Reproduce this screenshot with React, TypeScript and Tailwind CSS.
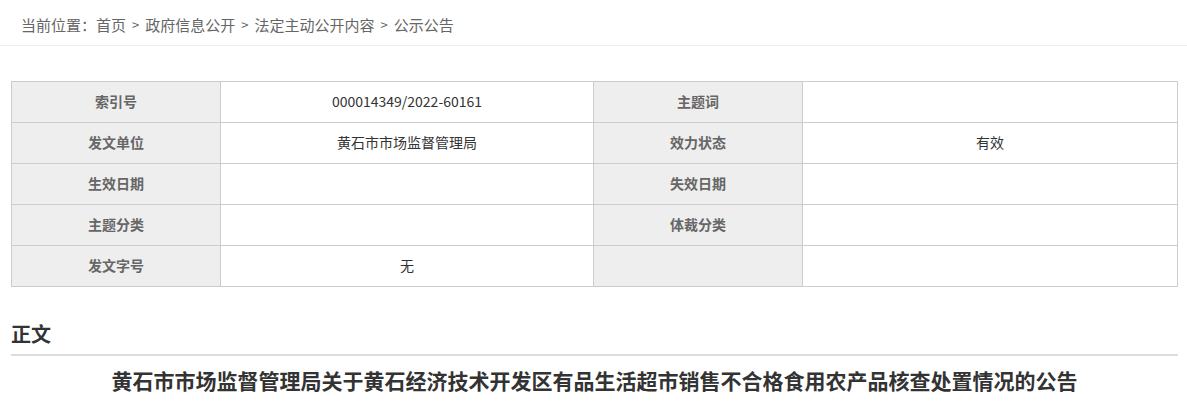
const font = { fontFamily: '"Microsoft YaHei", "Noto Sans CJK SC", sans-serif' };

const rows: [string, string, string, string][] = [
  ['索引号', '000014349/2022-60161', '主题词', ''],
  ['发文单位', '黄石市市场监督管理局', '效力状态', '有效'],
  ['生效日期', '', '失效日期', ''],
  ['主题分类', '', '体裁分类', ''],
  ['发文字号', '无', '', ''],
];

const crumbs = ['政府信息公开', '法定主动公开内容', '公示公告'];

export default function App() {
  return (
    <div className="bg-white w-[1187px] h-[409px] overflow-hidden" style={font}>
      <div className="h-[46px] border-b border-[#eeeeee] pl-[21px] pt-[13px] text-[15px] leading-[24px] text-[#666] flex">
        <span>当前位置：</span>
        <span>首页</span>
        {crumbs.map((c) => (
          <span key={c} className="flex">
            <span className="mx-[6px] text-[13px]">&gt;</span>
            <span>{c}</span>
          </span>
        ))}
      </div>

      <div className="ml-[11px] w-[1167px] pt-[35px]">
        <table className="w-full border-collapse table-fixed text-[14px]">
          <colgroup>
            <col className="w-[209px]" />
            <col className="w-[373px]" />
            <col className="w-[209px]" />
            <col />
          </colgroup>
          <tbody>
            {rows.map((r, i) => (
              <tr key={i} className="h-[41px]">
                <td className="border border-[#cccccc] bg-[#eeeeee] text-center font-bold text-[#666] p-0 pb-[2px]">{r[0]}</td>
                <td className="border border-[#cccccc] text-center text-[#333] p-0 pb-[2px]">{r[1]}</td>
                <td className="border border-[#cccccc] bg-[#eeeeee] text-center font-bold text-[#666] p-0 pb-[2px]">{r[2]}</td>
                <td className="border border-[#cccccc] text-center text-[#333] p-0 pb-[2px]">{r[3]}</td>
              </tr>
            ))}
          </tbody>
        </table>

        <div className="mt-[34px] pb-[7px] border-b-2 border-[#dddddd] text-[20px] leading-[26px] font-bold text-[#333]">
          正文
        </div>
        <h1 className="mt-[10px] text-center text-[21px] leading-[28px] font-bold text-[#333]">
          黄石市市场监督管理局关于黄石经济技术开发区有品生活超市销售不合格食用农产品核查处置情况的公告
        </h1>
      </div>
    </div>
  );
}
